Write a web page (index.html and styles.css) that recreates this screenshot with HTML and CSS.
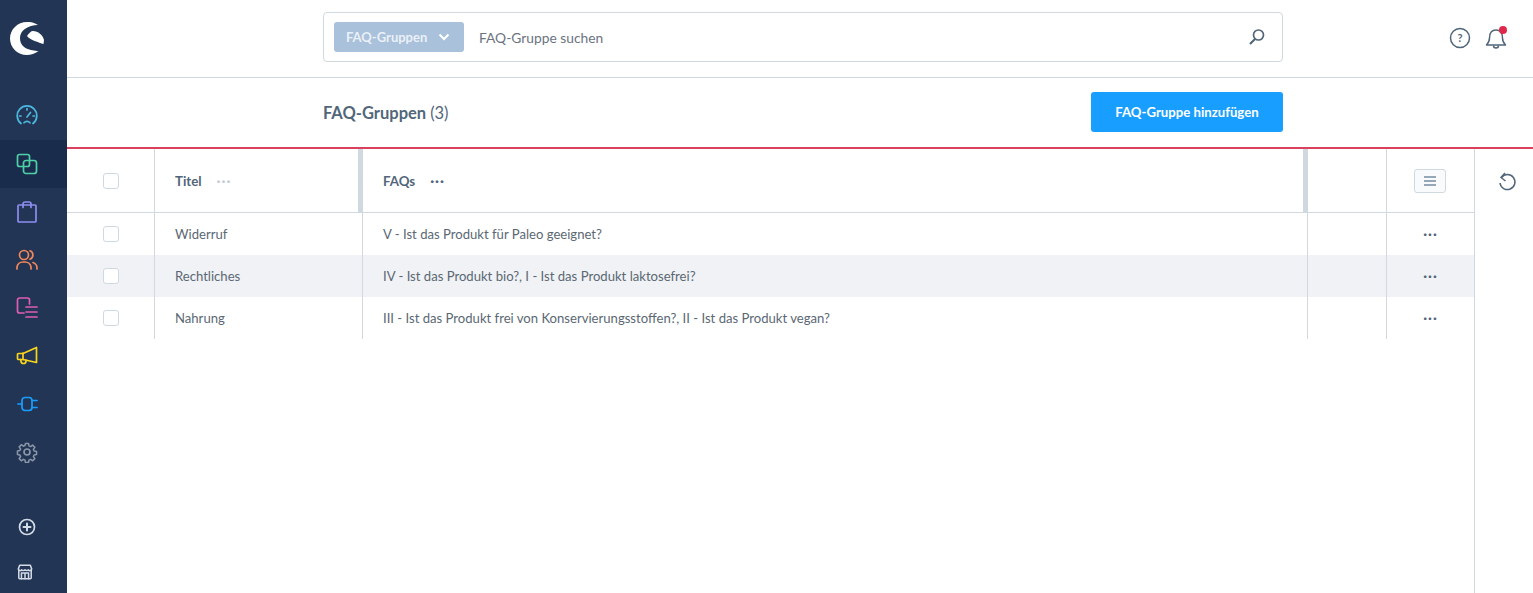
FILE: index.html
```html
<!DOCTYPE html>
<html lang="de">
<head>
  <meta charset="UTF-8" />
  <title>FAQ-Gruppen</title>
  <link rel="stylesheet" href="styles.css">
</head>
<body>

<nav class="sidebar">
  <div class="logo">
    <svg width="36" height="36" viewBox="9 22 36 36"><path fill="#fff" d="M38 26C34 23.500 31 23 27 23 17.500 23 10 30.500 10 39.500 10 48.500 17.500 56 27 56c4 0 8-1.500 11.500-4C31 51.500 20 50 20 39c0-8 8-12.500 18-13Z"/><path fill="#fff" d="M27 37c2-3 4-5 6-5 5 0 10 4 11 9l-.5 4C39 43.500 30 41 27 37Z"/></svg>
  </div>
  <ul class="menu">
    <li><svg class="ico" viewBox="0 0 22 22" stroke="#4cb7de"><path d="M5 18.500A9.800 9.800 0 1 1 17 18.500"/><path d="M8 17.800a4 4 0 0 1 6 0"/><path d="M11 12l3.500-4.500"/><path d="M11 3.500v1.500M3.500 11H5M17 11h1.500"/></svg></li>
    <li class="active"><svg class="ico" viewBox="0 0 22 22" stroke="#4fcfa6"><rect x="1.500" y="1.500" width="12" height="12" rx="2"/><rect x="7.500" y="7.500" width="13" height="13" rx="2.500"/></svg></li>
    <li><svg class="ico" viewBox="0 0 22 22" stroke="#8d8df0"><path d="M3 4h16a1 1 0 0 1 1 1v15a1 1 0 0 1-1 1H3a1 1 0 0 1-1-1V5a1 1 0 0 1 1-1Z"/><path d="M7 6.500V3a2 2 0 0 1 2-2h4a2 2 0 0 1 2 2v3.500"/></svg></li>
    <li><svg class="ico" viewBox="0 0 22 22" stroke="#f2875a"><circle cx="8" cy="6" r="4.500"/><path d="M1 20v-2a6 6 0 0 1 6-5h2a6 6 0 0 1 6 5v2"/><path d="M14 1.800a4.500 4.500 0 0 1 0 8.400"/><path d="M17 13.500a6 6 0 0 1 4 5V20"/></svg></li>
    <li><svg class="ico" viewBox="0 0 22 22" stroke="#e05db5"><path d="M8 16H3.500a2 2 0 0 1-2-2V3a2 2 0 0 1 2-2h8a2 2 0 0 1 2 2v4"/><path d="M10 10h11M10 15h11M10 20h11"/></svg></li>
    <li><svg class="ico" viewBox="0 0 22 22" stroke="#f7d51d"><path d="M20.500 2.500v15L7 14.500H2.500a1 1 0 0 1-1-1v-4a1 1 0 0 1 1-1H7Z"/><path d="M7 8v6.500M4.500 14.500l.5 1.500a2.500 2.500 0 0 0 5 0v-1"/></svg></li>
    <li><svg class="ico" viewBox="0 0 22 22" stroke="#189eff"><path d="M2 11h4M16 7.500h5M16 14.500h5"/><rect x="6" y="4.500" width="10" height="13" rx="3"/></svg></li>
    <li><svg class="ico" viewBox="0 0 22 22" stroke="#8a97a8"><circle cx="11" cy="11" r="3"/><path d="M9.300 1.500h3.400l.5 2.700 1.800.8 2.300-1.600 2.400 2.400-1.600 2.300.8 1.800 2.700.5v3.400l-2.700.5-.8 1.800 1.600 2.300-2.400 2.400-2.300-1.600-1.800.8-.5 2.700H9.300l-.5-2.700-1.800-.8-2.300 1.600-2.400-2.400 1.600-2.300-.8-1.800-2.700-.5V9.900l2.700-.5.8-1.800-1.600-2.300 2.400-2.400 2.300 1.600 1.800-.8Z" transform="translate(1.100 1.100) scale(.9)"/></svg></li>
  </ul>
  <ul class="menu menu-bottom">
    <li><svg class="ico-sm" viewBox="0 0 18 18" stroke="#d3dbe6"><circle cx="9" cy="9" r="7.500"/><path d="M9 5.500v7M5.500 9h7" stroke-width="2"/></svg></li>
    <li class="store"><svg class="ico-sm" viewBox="0 0 18 18" stroke="#d3dbe6"><path d="M2 7v8.500a1 1 0 0 0 1 1h12a1 1 0 0 0 1-1V7"/><path d="M3 1.500h12l1.500 4a2 2 0 0 1-3.700 1 2.400 2.400 0 0 1-3.800 0 2.400 2.400 0 0 1-3.800 0 2 2 0 0 1-3.700-1Z"/><path d="M5 16.500V10h8v6.500M9 10v6.500"/></svg></li>
  </ul>
</nav>

<div class="main">
  <header class="topbar">
    <div class="search">
      <button class="type-btn">FAQ-Gruppen
        <svg width="12" height="8" viewBox="0 0 12 8"><path d="M1.500 1.500 6 6l4.500-4.500" fill="none" stroke="#fff" stroke-width="2"/></svg>
      </button>
      <span class="search-text">FAQ-Gruppe suchen</span>
      <svg class="search-ico" width="18" height="18" viewBox="0 0 18 18" fill="none" stroke="#52667a" stroke-width="1.700"><circle cx="10.500" cy="7" r="5"/><path d="M7 11 2 16" stroke-width="2.200"/></svg>
    </div>
    <div class="top-actions">
      <svg width="22" height="22" viewBox="0 0 22 22" fill="none" stroke="#52667a" stroke-width="1.500"><circle cx="11" cy="11" r="9.500"/><text x="11" y="15" text-anchor="middle" class="q">?</text></svg>
      <span class="bell">
        <svg width="22" height="24" viewBox="0 0 22 24" fill="none" stroke="#52667a" stroke-width="1.500"><path d="M1.500 19c2-2 3-3 3-7 0-5 2.500-8 6.500-8s6.500 3 6.500 8c0 4 1 5 3 7Z" stroke-linejoin="round"/><path d="M8.500 19.500a2.500 2.500 0 0 0 5 0"/></svg>
        <i class="dot"></i>
      </span>
    </div>
  </header>

  <div class="smartbar">
    <h2>FAQ-Gruppen <span>(3)</span></h2>
    <button class="add-btn">FAQ-Gruppe hinzufügen</button>
  </div>

  <div class="content">
    <div class="grid">
      <div class="row head">
        <div class="cell check"><i class="box"></i></div>
        <div class="cell title">Titel <b class="dots light">···</b><i class="handle"></i></div>
        <div class="cell wide title">FAQs <b class="dots">···</b><i class="handle"></i></div>
        <div class="cell gap"></div>
        <div class="cell act"><span class="cols-btn"><svg width="14" height="12" viewBox="0 0 14 12"><path d="M1 2h12M1 6h12M1 10h12" stroke="#758ca3" stroke-width="1.500"/></svg></span></div>
      </div>
      <div class="row">
        <div class="cell check"><i class="box"></i></div>
        <div class="cell">Widerruf</div>
        <div class="cell wide">V - Ist das Produkt für Paleo geeignet?</div>
        <div class="cell gap"></div>
        <div class="cell act"><b class="dots">···</b></div>
      </div>
      <div class="row even">
        <div class="cell check"><i class="box"></i></div>
        <div class="cell">Rechtliches</div>
        <div class="cell wide">IV - Ist das Produkt bio?, I - Ist das Produkt laktosefrei?</div>
        <div class="cell gap"></div>
        <div class="cell act"><b class="dots">···</b></div>
      </div>
      <div class="row">
        <div class="cell check"><i class="box"></i></div>
        <div class="cell">Nahrung</div>
        <div class="cell wide">III - Ist das Produkt frei von Konservierungsstoffen?, II - Ist das Produkt vegan?</div>
        <div class="cell gap"></div>
        <div class="cell act"><b class="dots">···</b></div>
      </div>
    </div>
    <aside class="side">
      <svg width="20" height="20" viewBox="0 0 20 20" fill="none" stroke="#52667a" stroke-width="1.500"><path d="M4.500 5.500A7.500 7.500 0 1 1 3 11"/><path d="M8 1 4 5.500 8.500 9"/></svg>
    </aside>
  </div>
</div>

</body>
</html>
```

FILE: styles.css
```css
* {
  box-sizing: border-box;
}

html, body {
  height: 100%;
}

body {
  margin: 0;
  display: flex;
  overflow: hidden;
  font-family: "Lato", "Noto Sans", sans-serif;
  font-size: 14px;
  color: #5b6873;
  background: #fff;
}

/* sidebar */
.sidebar {
  width: 67px;
  flex: none;
  display: flex;
  flex-direction: column;
  background: #233554;
}

.logo {
  height: 78px;
  display: flex;
  align-items: center;
  padding-left: 9px;
}

.menu {
  list-style: none;
  margin: 0;
  padding: 14px 0 0;
}

.menu li {
  height: 48px;
  display: flex;
  align-items: center;
  padding-left: 16px;
}

.menu .active {
  background: #1a2c4c;
}

.menu-bottom {
  margin-top: auto;
  padding: 0;
  display: flex;
  flex-direction: column;
  gap: 3px;
}

.menu-bottom li {
  height: 42px;
  padding-left: 18px;
}

.menu-bottom .store {
  padding-left: 17px;
}

.ico, .ico-sm {
  fill: none;
  stroke-width: 1.700;
  stroke-linecap: round;
  stroke-linejoin: round;
}

.ico {
  width: 22px;
  height: 22px;
}

.ico-sm {
  width: 18px;
  height: 18px;
}

.store .ico-sm {
  width: 16px;
  height: 16px;
}

/* top bar */
.main {
  flex: 1;
  min-width: 0;
  display: flex;
  flex-direction: column;
}

.topbar {
  height: 78px;
  flex: none;
  display: flex;
  align-items: center;
  padding-left: 256px;
  border-bottom: 1px solid #d1d9e0;
}

.search {
  width: 960px;
  height: 50px;
  margin-bottom: 3px;
  display: flex;
  align-items: center;
  padding: 0 16px 0 10px;
  border: 1px solid #d1d9e0;
  border-radius: 4px;
}

.type-btn {
  height: 30px;
  width: 130px;
  display: flex;
  align-items: center;
  justify-content: space-between;
  padding: 0 14px 0 12px;
  border: 0;
  border-radius: 3px;
  background: #a9c1da;
  color: #e9f0f7;
  font: 700 13px "Lato", sans-serif;
}

.search-text {
  margin-left: 15px;
  flex: 1;
  font-size: 13.800px;
  color: #6b7480;
}

.q {
  font: 700 11px "Lato", sans-serif;
  fill: #52667a;
  stroke: none;
}

.top-actions {
  margin-left: auto;
  margin-bottom: 2px;
  display: flex;
  align-items: center;
  gap: 14px;
  padding-right: 26px;
}

.bell {
  position: relative;
  display: flex;
}

.dot {
  position: absolute;
  top: 0;
  right: 0;
  width: 8px;
  height: 8px;
  border-radius: 50%;
  background: #de294c;
}

/* smart bar */
.smartbar {
  height: 69px;
  flex: none;
  display: flex;
  align-items: center;
  justify-content: space-between;
  padding: 0 250px 2px 256px;
}

.smartbar h2 {
  margin: 2px 0 0;
  font-size: 16.500px;
  font-weight: 700;
  color: #52667a;
}

.smartbar h2 span {
  font-weight: 400;
}

.add-btn {
  width: 192px;
  height: 40px;
  border: 0;
  border-radius: 3px;
  background: #189eff;
  color: #fff;
  font: 700 13.200px "Lato", sans-serif;
}

/* list */
.content {
  flex: 1;
  min-height: 0;
  display: flex;
  border-top: 2px solid #d9415f;
}

.grid {
  width: 1408px;
  flex: none;
  border-right: 1px solid #d1d9e0;
}

.row {
  height: 42px;
  display: flex;
}

.row.head {
  height: 64px;
  border-bottom: 1px solid #d1d9e0;
}

.row.even {
  background: #f0f2f5;
}

.cell {
  position: relative;
  width: 208px;
  flex: none;
  display: flex;
  align-items: center;
  padding-left: 20px;
  border-right: 1px solid #d1d9e0;
  font-size: 13.100px;
}

.cell.check {
  width: 88px;
  justify-content: center;
  padding: 0;
}

.cell.wide {
  width: 945px;
}

.cell.gap {
  width: 79px;
}

.cell.act {
  width: 87px;
  justify-content: center;
  padding: 0;
  border-right: 0;
}

.cell.title {
  font-weight: 700;
  font-size: 13.300px;
  color: #52667a;
}

.box {
  width: 16px;
  height: 16px;
  border: 1px solid #d1d9e0;
  border-radius: 3px;
  background: #fff;
}

.dots {
  font-size: 14px;
  letter-spacing: 1px;
  color: #52667a;
  line-height: 1;
}

.title .dots {
  margin-left: 15px;
}

.dots.light {
  color: #c3ccd6;
}

.handle {
  position: absolute;
  top: 0;
  right: 0;
  bottom: 0;
  width: 4px;
  background: #d1d9e0;
}

.cols-btn {
  width: 32px;
  height: 24px;
  margin-right: 1px;
  display: flex;
  align-items: center;
  justify-content: center;
  border: 1px solid #d1d9e0;
  border-radius: 3px;
  background: #f9fafb;
}

.side {
  flex: 1;
  display: flex;
  justify-content: center;
  padding: 23px 0 0 6px;
}
```
